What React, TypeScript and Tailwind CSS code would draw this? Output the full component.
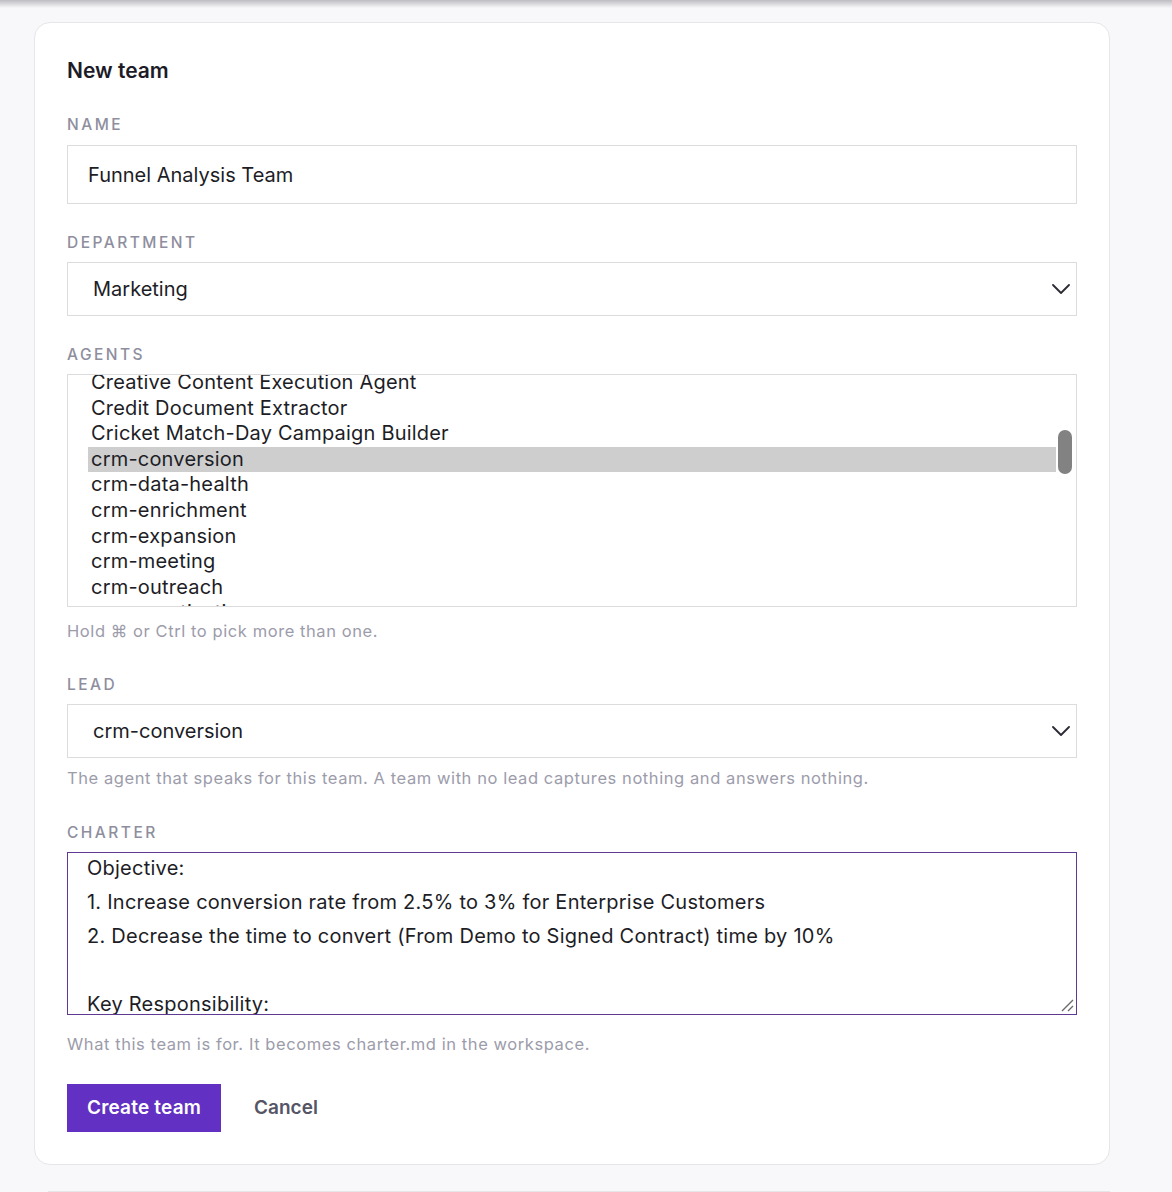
const agents = [
  'Creative Content Execution Agent',
  'Credit Document Extractor',
  'Cricket Match-Day Campaign Builder',
  'crm-conversion',
  'crm-data-health',
  'crm-enrichment',
  'crm-expansion',
  'crm-meeting',
  'crm-outreach',
  'crm-reactivation',
];

const charter = [
  'Objective:',
  '1. Increase conversion rate from 2.5% to 3% for Enterprise Customers',
  '2. Decrease the time to convert (From Demo to Signed Contract) time by 10%',
  '',
  'Key Responsibility:',
];

function Label({ children }: { children: string }) {
  return (
    <div className="text-[15.5px] font-medium uppercase tracking-[0.16em] text-[#8e8e9e] leading-5">
      {children}
    </div>
  );
}

function Hint({ children }: { children: string }) {
  return <p className="text-[16.5px] text-[#9c9cab] tracking-[0.035em] leading-5">{children}</p>;
}

function Chevron() {
  return (
    <svg width="18" height="10" viewBox="0 0 18 10" fill="none">
      <path d="M1 1 L9 9 L17 1" stroke="#2a2a33" strokeWidth="1.8" strokeLinecap="round" strokeLinejoin="round" />
    </svg>
  );
}

function SelectBox({ value }: { value: string }) {
  return (
    <div className="flex items-center justify-between h-[54px] border border-[#dcdcdf] bg-white pl-[25px] pr-[6px]">
      <span className="text-[20px] text-[#1d1d26]">{value}</span>
      <Chevron />
    </div>
  );
}

export default function App() {
  const selected = 'crm-conversion';

  return (
    <div
      className="min-h-[1192px] bg-[#f8f8fa] text-[#1d1d2b] overflow-hidden"
      style={{ fontFamily: 'Inter, "Noto Sans", sans-serif' }}
    >
      {/* header shadow from the bar above */}
      <div className="h-[8px] bg-gradient-to-b from-[#bdbdc2] to-[#f8f8fa]" />

      <div className="ml-[34px] mt-[14px] w-[1076px] rounded-[16px] border border-[#e6e6ea] bg-white px-[32px] pt-[36px] pb-[32px]">
        <h1 className="text-[21px] font-semibold leading-6 text-[#1c1c28]">New team</h1>

        {/* Name */}
        <div className="mt-[32px]">
          <Label>Name</Label>
          <div className="mt-[10px] flex items-center h-[59px] border border-[#dcdcdf] pl-[20px]">
            <span className="text-[20px] text-[#1d1d26]">Funnel Analysis Team</span>
          </div>
        </div>

        {/* Department */}
        <div className="mt-[29px]">
          <Label>Department</Label>
          <div className="mt-[9px]">
            <SelectBox value="Marketing" />
          </div>
        </div>

        {/* Agents multi-select */}
        <div className="mt-[29px]">
          <Label>Agents</Label>
          <div className="relative mt-[9px] h-[233px] overflow-hidden border border-[#dcdcdf] bg-white">
            <div className="-mt-[5px] pl-[20px] pr-[20px]">
              {agents.map((a) => (
                <div
                  key={a}
                  className={`h-[25.6px] pl-[3px] text-[20px] tracking-[0.01em] leading-[25.6px] text-[#1d1d26] ${
                    a === selected ? 'bg-[#cecece]' : ''
                  }`}
                >
                  {a}
                </div>
              ))}
            </div>
            <div className="absolute right-[4px] top-[55px] h-[44px] w-[14px] rounded-full bg-[#828282]" />
          </div>
          <div className="mt-[14px]">
            <Hint>Hold ⌘ or Ctrl to pick more than one.</Hint>
          </div>
        </div>

        {/* Lead */}
        <div className="mt-[34px]">
          <Label>Lead</Label>
          <div className="mt-[9px]">
            <SelectBox value="crm-conversion" />
          </div>
          <div className="mt-[10px]">
            <Hint>The agent that speaks for this team. A team with no lead captures nothing and answers nothing.</Hint>
          </div>
        </div>

        {/* Charter */}
        <div className="mt-[35px]">
          <Label>Charter</Label>
          <div className="relative mt-[9px] h-[163px] overflow-hidden border-[1.5px] border-[#5e3a94] bg-white pl-[19px]">
            <div className="-mt-[2px]">
              {charter.map((line, i) => (
                <div
                  key={i}
                  className="h-[34px] text-[20px] tracking-[0.012em] leading-[34px] text-[#1d1d26] whitespace-pre"
                >
                  {line}
                </div>
              ))}
            </div>
            <svg className="absolute right-[2px] bottom-[2px]" width="14" height="14" viewBox="0 0 14 14">
              <path d="M2 13 L13 2 M8 13 L13 8" stroke="#6b6b6b" strokeWidth="1.4" />
            </svg>
          </div>
          <div className="mt-[19px]">
            <Hint>What this team is for. It becomes charter.md in the workspace.</Hint>
          </div>
        </div>

        {/* Actions */}
        <div className="mt-[30px] flex items-center gap-[33px]">
          <button className="h-[48px] px-[20px] bg-[#6230c2] text-white text-[19px] font-semibold tracking-[0.01em]">
            Create team
          </button>
          <button className="text-[19px] font-semibold text-[#555566]">Cancel</button>
        </div>
      </div>

      {/* top edge of the next panel */}
      <div className="ml-[48px] mt-[26px] w-[1062px] h-[20px] border-t border-[#e6e6ea] bg-[#fbfbfc]" />
    </div>
  );
}
